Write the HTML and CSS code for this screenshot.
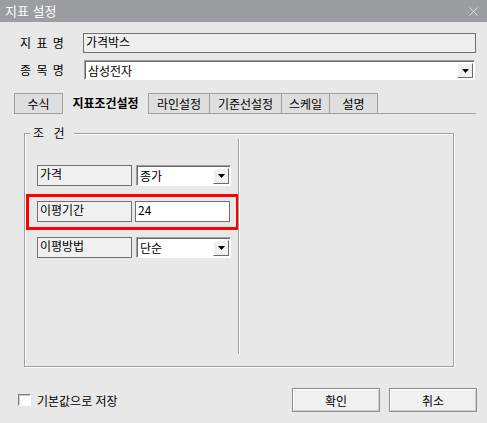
FILE: index.html
```html
<!DOCTYPE html>
<html lang="ko">
<head>
<meta charset="utf-8">
<title>지표 설정</title>
<link rel="stylesheet" href="styles.css">
</head>
<body>
<div class="window">
  <div class="titlebar">
    <span class="title">지표 설정</span>
    <svg class="close" width="9" height="9" viewBox="0 0 9 9"><path d="M0.5 0.5L8.5 8.5M8.5 0.5L0.5 8.5" stroke="#dcdcdc" stroke-width="1"/></svg>
  </div>

  <div class="field-row r1">
    <span class="lbl">지 표 명</span>
    <div class="textbox readonly name-box">가격박스</div>
  </div>
  <div class="field-row r2">
    <span class="lbl">종 목 명</span>
    <div class="combo stock-combo">
      <span class="combo-text">삼성전자</span>
      <span class="dd"><svg width="7" height="4" viewBox="0 0 7 4"><path d="M0 0H7L3.5 4Z" fill="#000"/></svg></span>
    </div>
  </div>

  <div class="tabs">
    <div class="tab w48">수식</div>
    <div class="tab active">지표조건설정</div>
    <div class="tab w62">라인설정</div>
    <div class="tab w73">기준선설정</div>
    <div class="tab w49">스케일</div>
    <div class="tab w49">설명</div>
  </div>

  <div class="group">
    <span class="caption">조 건</span>
    <div class="group-inner">
      <div class="left-col">
        <div class="cond-row first">
          <div class="cond-label">가격</div>
          <div class="combo cond-combo">
            <span class="combo-text">종가</span>
            <span class="dd"><svg width="7" height="4" viewBox="0 0 7 4"><path d="M0 0H7L3.5 4Z" fill="#000"/></svg></span>
          </div>
        </div>
        <div class="highlight">
          <div class="cond-row">
            <div class="cond-label">이평기간</div>
            <div class="textbox cond-input">24</div>
          </div>
        </div>
        <div class="cond-row third">
          <div class="cond-label">이평방법</div>
          <div class="combo cond-combo">
            <span class="combo-text">단순</span>
            <span class="dd"><svg width="7" height="4" viewBox="0 0 7 4"><path d="M0 0H7L3.5 4Z" fill="#000"/></svg></span>
          </div>
        </div>
      </div>
      <div class="sep"></div>
    </div>
  </div>

  <div class="footer">
    <label class="check"><span class="checkbox"></span><span>기본값으로 저장</span></label>
    <div class="buttons">
      <button class="btn">확인</button>
      <button class="btn">취소</button>
    </div>
  </div>
</div>
</body>
</html>
```

FILE: styles.css
```css
* { box-sizing: border-box; }
html, body { margin: 0; padding: 0; }
body {
  background: #e8e8e8;
  font-family: "Noto Sans CJK KR", "Noto Sans", sans-serif;
  font-size: 12px;
  color: #000;
}
.window {
  width: 487px;
  height: 423px;
  background: #e8e8e8;
  overflow: hidden;
}
.titlebar {
  height: 22px;
  background: #9b9da1;
  display: flex;
  align-items: center;
  justify-content: space-between;
  padding: 0 9px 0 5px;
}
.title {
  color: #fff;
  font-size: 13px;
  line-height: 22px;
}
.close { display: block; }

.field-row {
  display: flex;
  align-items: center;
  padding-left: 20px;
}
.r1 { margin-top: 11px; }
.r2 { margin-top: 7px; }
.lbl {
  width: 63px;
  line-height: 20px;
  word-spacing: 2px;
}
.textbox {
  height: 20px;
  border: 1px solid #707070;
  background: #fff;
  padding: 0 2px;
  line-height: 16px;
}
.readonly { background: #efefef; }
.name-box { width: 393px; }

.combo {
  display: flex;
  align-items: stretch;
  height: 20px;
  background: #fff;
  border: 1px solid;
  border-color: #a0a0a0 #fff #fff #a0a0a0;
  box-shadow: inset 1px 1px 0 #6a6a6a;
  padding: 2px 1px 1px 2px;
}
.combo-text {
  flex: 1;
  line-height: 15px;
  padding-left: 1px;
}
.dd {
  width: 16px;
  background: #f0f0f0;
  border: 1px solid;
  border-color: #fff #6a6a6a #6a6a6a #fff;
  display: flex;
  align-items: center;
  justify-content: center;
}
.dd svg { display: block; }
.stock-combo { width: 391px; margin-left: 1px; }

.tabs {
  display: flex;
  margin: 13px 0 0 14px;
  width: 462px;
  height: 21px;
  border-bottom: 1px solid #a0a0a0;
}
.tab {
  height: 20px;
  border: 1px solid #a0a0a0;
  border-bottom: none;
  background: #dedede;
  text-align: center;
  line-height: 19px;
  margin-left: -1px;
}
.tab:first-child { margin-left: 0; }
.w48 { width: 49px; }
.w49 { width: 49px; }
.w62 { width: 62px; }
.w73 { width: 73px; }
.tab.active {
  width: 85px;
  border: none;
  background: #e8e8e8;
  font-weight: bold;
  height: 21px;
  line-height: 20px;
  margin-left: 0;
  margin-right: 1px;
}

.group {
  position: relative;
  margin: 19px 0 0 24px;
  width: 430px;
  height: 234px;
  border: 1px solid #a0a0a0;
  box-shadow: 1px 1px 0 #fff, inset 1px 1px 0 #fff;
}
.caption {
  position: absolute;
  left: 5px;
  top: -9px;
  padding: 0 7px 0 3px;
  background: #e8e8e8;
  line-height: 16px;
  letter-spacing: 3px;
}
.group-inner {
  display: flex;
}
.left-col {
  width: 213px;
}
.sep {
  margin-top: 5px;
  width: 2px;
  height: 215px;
  border-left: 1px solid #a0a0a0;
  border-right: 1px solid #fff;
}
.cond-row {
  display: flex;
  align-items: flex-start;
  margin-left: 12px;
}
.cond-row.first { margin-top: 31px; }
.cond-row.third { margin-top: 7px; }
.cond-label {
  width: 95px;
  height: 21px;
  border: 1px solid #707070;
  background: #f0f0f0;
  padding: 0 2px;
  line-height: 15px;
}
.cond-combo {
  width: 95px;
  height: 21px;
  margin-left: 4px;
}
.cond-input {
  width: 95px;
  height: 21px;
  margin-left: 3px;
  line-height: 15px;
}
.highlight {
  margin: 8px 0 0 1px;
  width: 213px;
  border: 3px solid #ff0000;
  padding: 4px 0 5px 0;
}
.highlight .cond-row { margin-left: 8px; }

.footer {
  display: flex;
  align-items: center;
  margin-top: 21px;
  height: 24px;
}
.check {
  display: flex;
  align-items: center;
  margin-left: 18px;
}
.checkbox {
  width: 13px;
  height: 12px;
  background: #fff;
  border: 1px solid;
  border-color: #808080 #fff #fff #808080;
  box-shadow: inset 1px 1px 0 #c8c8c8;
  margin-right: 6px;
}
.buttons {
  margin-left: auto;
  margin-right: 10px;
  display: flex;
  gap: 9px;
}
.btn {
  width: 88px;
  height: 24px;
  border: 1px solid #8c8c8c;
  background: #f0f0f0;
  box-shadow: inset 1px 1px 0 #fff, inset -1px -1px 0 #d0d0d0;
  font-family: "Noto Sans CJK KR", "Noto Sans", sans-serif;
  font-size: 12px;
  color: #000;
  padding: 0;
}
```
